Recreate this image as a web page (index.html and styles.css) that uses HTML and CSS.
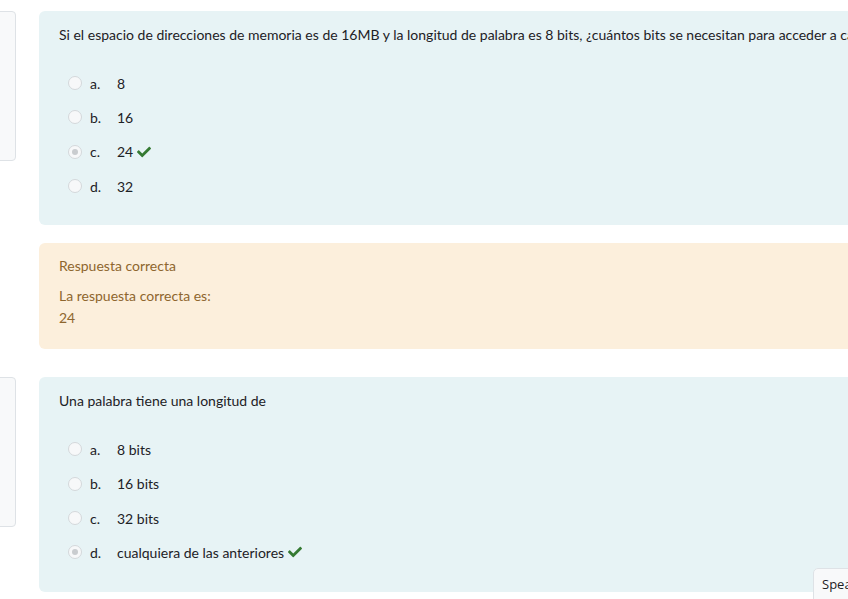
FILE: index.html
```html
<!DOCTYPE html>
<html lang="es">
<head>
    <meta charset="UTF-8">
    <title>Revisión del intento</title>
    <link rel="stylesheet" href="styles.css">
</head>
<body>
    <div class="que">
        <div class="info"></div>
        <div class="content">
            <div class="formulation">
                <div class="qtext">Si el espacio de direcciones de memoria es de 16MB y la longitud de palabra es 8 bits, ¿cuántos bits se necesitan para acceder a cada palabra?</div>
                <div class="answer">
                    <div class="option"><span class="radio"></span><span class="letter">a.</span><span class="value">8</span></div>
                    <div class="option"><span class="radio"></span><span class="letter">b.</span><span class="value">16</span></div>
                    <div class="option"><span class="radio checked"></span><span class="letter">c.</span><span class="value">24</span>
                        <svg class="tick" viewBox="0 0 512 512"><path d="M173.9 439.4l-166.4-166.4c-10-10-10-26.2 0-36.2l36.2-36.2c10-10 26.2-10 36.2 0L192 312.7 432.1 72.6c10-10 26.2-10 36.2 0l36.2 36.2c10 10 10 26.2 0 36.2l-294.4 294.4c-10 10-26.2 10-36.2 0z"/></svg>
                    </div>
                    <div class="option"><span class="radio"></span><span class="letter">d.</span><span class="value">32</span></div>
                </div>
            </div>
            <div class="outcome">
                <div class="feedback">Respuesta correcta</div>
                <div class="rightanswer">La respuesta correcta es:<br>24</div>
            </div>
        </div>
    </div>

    <div class="que">
        <div class="info"></div>
        <div class="content">
            <div class="formulation">
                <div class="qtext">Una palabra tiene una longitud de</div>
                <div class="answer">
                    <div class="option"><span class="radio"></span><span class="letter">a.</span><span class="value">8 bits</span></div>
                    <div class="option"><span class="radio"></span><span class="letter">b.</span><span class="value">16 bits</span></div>
                    <div class="option"><span class="radio"></span><span class="letter">c.</span><span class="value">32 bits</span></div>
                    <div class="option"><span class="radio checked"></span><span class="letter">d.</span><span class="value">cualquiera de las anteriores</span>
                        <svg class="tick" viewBox="0 0 512 512"><path d="M173.9 439.4l-166.4-166.4c-10-10-10-26.2 0-36.2l36.2-36.2c10-10 26.2-10 36.2 0L192 312.7 432.1 72.6c10-10 26.2-10 36.2 0l36.2 36.2c10 10 10 26.2 0 36.2l-294.4 294.4c-10 10-26.2 10-36.2 0z"/></svg>
                    </div>
                </div>
            </div>
        </div>
    </div>

    <button class="speak">Speak</button>
</body>
</html>
```

FILE: styles.css
```css
html, body {
    overflow: hidden;
}
body {
    margin: 0;
    padding: 11px 0 0 0;
    background-color: #fff;
    font-family: Lato, "Open Sans", sans-serif;
    font-size: 14px;
    color: #1d2125;
}
.que {
    display: flex;
    gap: 23px;
    margin-left: -100px;
    margin-bottom: 28px;
}
.info {
    flex: none;
    width: 114px;
    height: 148px;
    background-color: #f8f9fa;
    border: 1px solid #dee2e6;
    border-radius: 4px;
}
.content {
    flex: 1;
    min-width: 0;
}
.formulation {
    background-color: #e7f3f5;
    border-radius: 6px 0 0 6px;
    padding: 14px 20px 22px;
    white-space: nowrap;
}
.qtext {
    line-height: 20px;
}
.answer {
    margin-top: 21px;
}
.option {
    display: flex;
    align-items: center;
    height: 34.33px;
    padding-left: 9px;
}
.radio {
    width: 12px;
    height: 12px;
    border: 1px solid #d4d8db;
    border-radius: 50%;
    background-color: #f7f8f9;
    margin-right: 8px;
    position: relative;
}
.radio.checked::after {
    content: "";
    position: absolute;
    left: 3px;
    top: 3px;
    width: 6px;
    height: 6px;
    border-radius: 50%;
    background-color: #c9cccf;
}
.letter {
    width: 27px;
}
.tick {
    width: 14px;
    height: 14px;
    fill: #357a32;
    margin-left: 4px;
}
.outcome {
    margin-top: 18px;
    background-color: #fcefdc;
    color: #8e662e;
    border-radius: 6px 0 0 6px;
    padding: 13px 20px 20px;
}
.feedback {
    line-height: 20px;
    margin-bottom: 9px;
}
.rightanswer {
    line-height: 22px;
}
.speak {
    position: fixed;
    left: 813px;
    top: 568px;
    padding: 6px 8px 10px;
    background-color: #f8f9fa;
    border: 1px solid #dee2e6;
    border-radius: 5px;
    font-family: "Open Sans", sans-serif;
    font-size: 13px;
    color: #1d2125;
    white-space: nowrap;
}
```
